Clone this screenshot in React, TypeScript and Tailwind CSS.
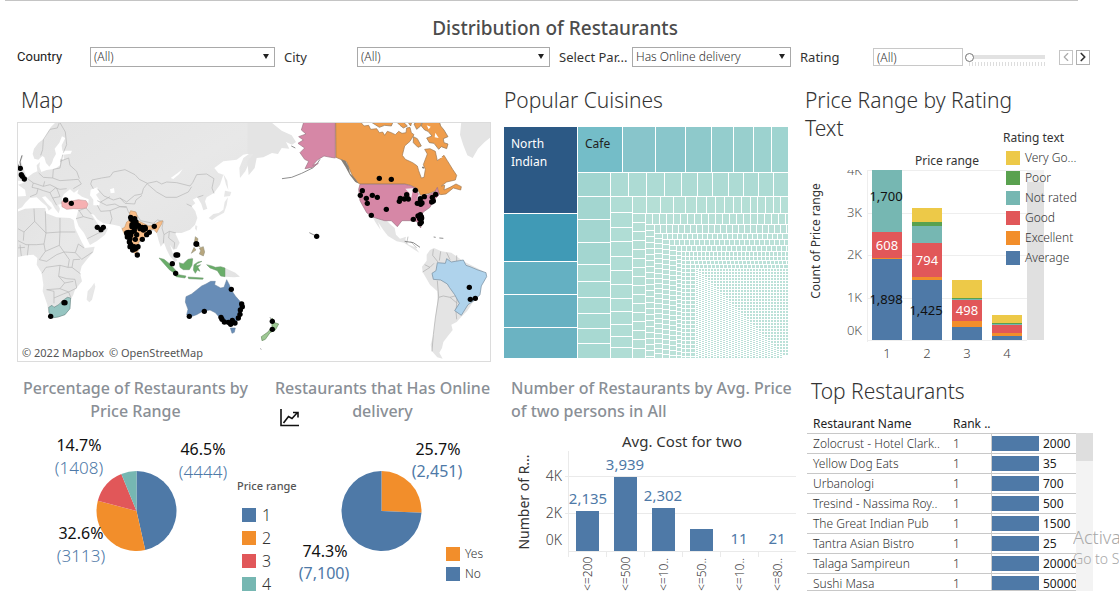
import React from "react";
import { ChevronLeft, ChevronRight } from "lucide-react";

const BLUE = "#4e79a7";
const ORANGE = "#f28e2b";
const RED = "#e15759";
const TEAL = "#76b7b2";
const GREEN = "#59a14f";
const YELLOW = "#edc948";

/* ---------- Filters ---------- */

function SelectFilter({ id, label, value, sans }: { id: string; label: string; value: string; sans?: boolean }) {
  return (
    <>
      <label
        htmlFor={id}
        className={
          sans
            ? "truncate font-['Roboto',sans-serif] text-[13px] text-[#222]"
            : "truncate text-[13px] text-[#333]"
        }
      >
        {label}
      </label>
      <div className="relative mr-[9px] h-5">
        <select
          id={id}
          className="block h-5 w-full appearance-none border border-[#a9a9a9] bg-white pl-[3px] pr-5 text-xs leading-[18px] font-light text-[#333] outline-none"
        >
          <option>{value}</option>
        </select>
        <svg viewBox="0 0 6 5" className="pointer-events-none absolute top-[7px] right-[6px] h-[5px] w-[6px]">
          <path d="M0 0H6L3 5Z" fill="#222" />
        </svg>
      </div>
    </>
  );
}

function Filters() {
  return (
    <form className="grid grid-cols-[73px_194fr_73px_202fr_73px_168fr_73px_90fr_96fr_60px] items-center pl-[17px] leading-5">
      <SelectFilter id="country" label="Country" value="(All)" sans />
      <SelectFilter id="city" label="City" value="(All)" />
      <SelectFilter id="param" label="Select Par..." value="Has Online delivery" />
      <label htmlFor="rating" className="text-[13px] text-[#333]">
        Rating
      </label>
      <input
        id="rating"
        defaultValue="(All)"
        className="h-[18px] w-full border border-[#c8c8c8] pl-[3px] text-xs font-light text-[#333] outline-none"
      />
      <div className="mr-[14px] ml-[2px] flex flex-col">
        <input
          type="range"
          aria-label="Rating value"
          defaultValue={0}
          className="mt-1 h-[9px] w-full appearance-none bg-transparent bg-[linear-gradient(#e2e2e2,#e2e2e2)] bg-[length:100%_4px] bg-center bg-no-repeat [&::-webkit-slider-thumb]:h-[9px] [&::-webkit-slider-thumb]:w-[9px] [&::-webkit-slider-thumb]:appearance-none [&::-webkit-slider-thumb]:rounded-full [&::-webkit-slider-thumb]:border [&::-webkit-slider-thumb]:border-[#777] [&::-webkit-slider-thumb]:bg-white"
        />
        <div className="ml-1 h-1 bg-[repeating-linear-gradient(90deg,#ddd_0_1px,transparent_1px_3px)]" />
      </div>
      <div className="flex gap-[3px]">
        <button type="button" aria-label="Previous" className="flex h-[15px] w-[14px] items-center justify-center border border-[#c4c4c4] text-[#aaa]">
          <ChevronLeft size={14} className="shrink-0" />
        </button>
        <button type="button" aria-label="Next" className="flex h-[15px] w-[14px] items-center justify-center border border-[#b0b0b0] text-[#333]">
          <ChevronRight size={14} strokeWidth={3} className="shrink-0" />
        </button>
      </div>
    </form>
  );
}

/* ---------- Map ---------- */

const westDots: number[][] = [
  [31, 151], [34, 170], [37, 175], [43, 183], [167, 246], [184, 256], [262, 328], [273, 335], [280, 328],
  [162, 554], [165, 554], [122, 595], [558, 378], [560, 378], [498, 411], [503, 411], [487, 437], [497, 466],
  [664, 514], [538, 595], [583, 580], [633, 598], [636, 604], [643, 612], [655, 613], [662, 619], [667, 607],
  [675, 615], [685, 600], [690, 589], [691, 576], [697, 566], [695, 558], [362, 298], [374, 302], [370, 310],
  [372, 320], [386, 323], [397, 328], [406, 332], [418, 343], [410, 350], [433, 325], [355, 343], [352, 350],
  [365, 343], [373, 338], [356, 356], [362, 352], [380, 350], [376, 364], [397, 364], [358, 372], [360, 386],
  [372, 386], [384, 386], [368, 396], [375, 393], [382, 411], [405, 328], [366, 320], [350, 345],
  [364, 304], [378, 312], [380, 320], [390, 332], [400, 336], [352, 357], [360, 362], [362, 379], [366, 388],
  [378, 390], [366, 326], [376, 328],
];

const eastDots: number[][] = [
  [388, 181], [424, 184], [337, 218], [331, 232], [349, 241], [367, 232], [382, 238], [352, 256], [409, 274],
  [364, 292], [448, 250], [451, 241], [463, 243], [475, 243], [470, 230], [496, 217], [502, 256], [511, 242],
  [511, 252], [512, 259], [523, 236], [516, 255], [547, 238], [545, 252], [550, 249], [557, 229], [490, 304],
  [504, 294], [511, 290], [514, 296], [509, 302], [514, 313], [510, 317], [200, 355], [67, 610], [67, 634],
  [658, 508], [661, 544], [676, 541], [513, 304], [515, 300],
];

function WorldMap() {
  return (
    <svg viewBox="1 1 472 238" className="block w-full" role="img" aria-label="Restaurant locations">
      <defs>
        <linearGradient id="relief" x1="0" y1="0" x2="1" y2="1">
          <stop offset="0" stopColor="#e3e3e3" />
          <stop offset="0.5" stopColor="#e8e8e8" />
          <stop offset="1" stopColor="#e2e2e2" />
        </linearGradient>
      </defs>
      <g transform="translate(-7 -4) scale(0.33333)" strokeLinejoin="round">
        <g fill="url(#relief)">
          <path d="M122 28L105 60L85 75L72 92L68 108L73 122L85 125L97 114L103 118L108 135L118 146L126 135L130 122L138 108L134 92L148 74L156 55L166 60L155 82L157 98L186 98L182 107L160 110L162 125L150 122L150 142L135 152L110 156L94 162L88 146L90 132L80 142L82 160L70 165L50 180L40 195L24 200L45 215L48 234L20 236L20 276L36 268L46 254L60 240L80 238L95 252L110 265L116 278L126 270L112 257L96 238L106 235L125 254L135 272L146 286L150 272L144 260L158 257L155 242L162 228L180 214L192 224L206 214L202 226L216 236L236 244L234 270L205 276L198 302L206 325L222 345L232 365L240 381L262 368L285 350L294 332L282 322L265 320L252 300L244 288L252 290L262 304L280 316L310 320L330 325L338 338L350 345L352 370L362 398L374 404L382 385L400 365L418 345L430 338L440 345L446 368L452 386L462 374L470 395L480 415L495 432L502 427L488 405L480 380L490 395L500 392L509 374L500 355L495 345L515 345L540 335L555 320L562 300L556 280L545 265L556 256L548 245L562 238L574 258L580 277L592 272L585 250L590 238L612 225L630 200L640 170L625 165L613 150L640 130L680 125L700 110L720 106L700 120L688 150L690 180L706 160L720 130L735 108L760 92V10H180L214 28L210 42L190 44L182 62L198 66L226 44L235 34L238 10H140Z" />
          <path d="M20 282L45 272L80 270L106 270L108 286L140 298L180 300L191 306L195 330L214 370L225 390L254 386L250 402L230 425L215 445L210 465L216 490L195 515L190 530L182 545L180 570L165 590L145 597L125 600L115 585L112 560L98 520L100 500L95 465L80 440L82 420L70 410L50 412L20 418Z" />
          <path d="M253 494L256 506L246 545L238 553L230 545L233 520L245 506Z" />
          <path d="M20 150L28 132L38 110L40 114L33 130L40 150L50 178L44 190L22 188Z" />
          <path d="M596 300L610 288L626 285L640 275L644 252L654 238L650 262L642 284L620 296L606 306ZM642 236L645 218L664 222L660 234ZM640 168L652 188L655 216L648 200ZM645 450L676 464L690 476L672 478L645 476Z" />
          <path d="M384 398L390 405L388 416L380 412ZM512 440L525 430L545 418L550 426L530 436ZM556 322L562 324L560 338L555 332Z" />
        </g>
        <path d="M242 215L262 208L268 222L258 230L270 248L268 262L250 262L250 245L240 232ZM300 214L312 210L314 224L302 226ZM482 180L504 164L518 153L508 168L490 183Z" fill="#fff" />
        <path d="M36 112L30 132L34 150M26 140L24 150" fill="none" stroke="#666" strokeWidth="2.5" />
        <g fill="none" stroke="#b5b5b5" strokeWidth="2">
          <path d="M148 14L142 30L120 34L100 65L98 95L92 112M150 14L166 42L170 80L160 104M158 110L150 150L130 154L128 180L100 178L86 165M128 180L150 188L205 184L214 198L190 212M150 130L176 120L180 142L200 160L208 182M50 180L70 195L66 208L84 212L80 228L60 236M70 195L100 205L120 200L140 210L150 236L128 240L120 224L100 218L84 212M100 205L104 190M120 224L136 210L150 214L170 212M128 240L140 262" />
          <path d="M250 212L242 198L246 186L275 180L300 176L310 162L345 155L375 170L388 184L412 196L400 212L396 228L374 232L350 252L330 240L310 246L292 238L282 234L262 212M412 196L440 190L455 198L470 192L500 194L540 204L548 194L560 170L590 168L612 182L606 210L612 226M412 198L440 222L468 238L500 238L535 222L545 206M262 248L290 262L315 258L330 266L350 266M330 240L345 256L374 258L378 246L396 232M272 252L300 236" />
          <path d="M262 262L272 280L300 278L330 266L350 268L356 284M300 278L306 302L300 318M206 278L228 270L244 288M206 276L220 296L250 304M198 302L220 296M232 362L266 345L285 336M262 320L270 346M356 284L375 282L392 308L430 316L442 306L460 310L456 330L462 350L478 340L498 345M418 342L420 326L436 320M462 350L460 376M478 340L476 360L494 374L492 392M545 265L530 258M562 238L580 232" />
          <path d="M72 272L74 310L42 342L20 330M106 280L108 345L150 342V300M150 342L196 342M74 310L108 345L102 378L80 380L48 380L20 366M42 342L40 368M102 378L106 400L88 425M150 342L148 382L162 402L196 404L205 378L222 390M106 400L148 382M88 425L110 430L140 410L162 402M196 404L215 424L248 402M162 402L178 425L174 448L186 448L212 468M174 448L150 442L108 448L96 466M150 442L146 475L164 495L150 512L110 515M186 448L190 425L210 424M146 475L170 482L195 484L200 510L176 522L150 512M110 515L132 520V556M132 540L160 528L176 522L182 538M164 495L190 490M30 380L34 414M56 380L52 412M20 390L45 388" />
        </g>
        <g stroke="#8b8b78" strokeWidth="1.5">
          <path d="M155 252L162 243L180 250L205 245L228 248L234 258L230 270L206 273L190 272L170 274L156 266Z" fill="#f6b0b2" stroke="#bb8d8f" />
          <path d="M362 278L378 282L382 296L378 306L392 312L416 324L430 322L445 312L458 308L455 318L446 332L440 344L432 334L420 334L414 346L400 362L386 372L386 396L376 408L368 400L358 378L354 358L342 346L336 332L344 328L350 312L364 302L358 288Z" fill="#f9bd88" stroke="#b98d62" />
          <path d="M182 540L180 572L165 590L145 597L125 600L117 583L116 568L126 562L132 568L146 560L158 548L172 538Z" fill="#96c5c1" stroke="#55716f" />
          <path d="M447 420L462 424L482 440L498 458L496 468L478 455ZM508 434L520 438L534 424L548 422L546 442L538 455L520 455L510 448ZM552 440L564 432L576 430L560 438L558 444L572 440L564 448L570 460L562 456L556 466L550 456ZM590 440L606 444L616 448L632 446L645 450L645 476L632 474L622 458L600 450ZM494 468L528 474L525 480L498 476ZM534 477L580 480L578 484L536 482Z" fill="#69ad69" stroke="#6f9670" />
          <path d="M556 356L564 362L562 374L570 386L560 384L553 374ZM568 390L580 386L584 402L580 414L568 408L572 398ZM552 388L558 396L544 406Z" fill="#b7a67e" />
          <path d="M528 536L545 528L560 516L575 504L588 498L602 490L616 490L614 500L632 510L642 508L650 485L658 500L664 516L676 534L690 550L698 566L694 586L684 606L672 618L652 617L638 604L628 598L616 584L600 576L578 580L560 590L538 598L530 590L534 574L526 552ZM661 630L676 630L673 643L666 646Z" fill="#688db7" stroke="#647d99" />
        </g>
        <g>
          {westDots.map(([x, y], i) => (
            <circle key={i} cx={x} cy={y} r="8" fill="#000" />
          ))}
        </g>
      </g>
      <g transform="translate(233 -4) scale(0.33333)" strokeLinejoin="round">
        <g fill="#e4e4e4">
          <path d="M-8 10H60L95 38L125 52L138 72L126 80L108 72L118 92L95 90L84 108L66 105L40 118L20 120L14 150L-4 172L-8 130L10 108L-8 108Z" />
          <path d="M634 10L630 50L640 82L652 112L668 120L684 92L704 72L722 58V10Z" />
          <path d="M368 298L382 300L408 306L424 322L434 330L438 350L450 362L468 356L466 366L476 380L496 388L508 404L498 398L480 386L462 374L440 370L414 354L400 336L384 312L392 336L378 316Z" />
          <path d="M540 396L552 390L574 400L604 404L640 430L700 460L690 520L652 578L634 596L620 612L604 620L608 636L592 656L580 672L576 690L568 704L578 722L562 718L546 700L542 680L550 650L556 600L562 550L562 520L540 500L518 462L516 446L530 428L530 410Z" />
        </g>
        <path d="M550 394L548 412L564 432M524 440L540 448L552 436M518 462L540 448M562 488L566 538L580 534L600 538L622 556M566 538L556 600L550 650L546 700M600 538L622 532L618 580L620 604M572 400L568 428M590 404L600 425M620 412V430M474 356L470 376M482 370L500 390" fill="none" stroke="#aaa" strokeWidth="2" />
        <path d="M96 182L125 178L155 166L188 150L202 136L210 124M464 370L490 374L510 388M178 344L194 352M60 598L66 606M551 357L557 358M568 360L580 361M31 692L34 694M124 84L136 90" fill="none" stroke="#777" strokeWidth="2.5" />
        <path d="M162 10H256V120L242 118L222 114L202 126L188 142L205 136L188 148L165 152L176 130L164 124L150 104L164 90L144 76L160 66L146 56L168 48L154 36Z" fill="#d687a6" stroke="#9b7384" strokeWidth="2" />
        <path d="M257 10H330L342 24L356 22L362 34L380 32L388 44L398 42L404 52L412 40L424 44L436 50L446 40L456 46L468 44L470 30L480 28L484 44L492 50L480 70L464 84L457 112L466 124L488 134L502 144L506 158L514 180L522 178L526 154L520 140L532 108L524 94L540 92L556 100L562 128L582 112L592 128L608 154L620 172L616 186L590 192L574 204L584 202L582 216L600 208L618 198L634 206L632 216L610 210L588 228L572 230L558 218L538 226L512 232L502 212L482 202L465 198H330L316 190L304 166L290 132L258 118Z" fill="#ef9d4c" stroke="#9b7650" strokeWidth="2" />
        <path d="M360 10H430L424 24L404 22L388 28ZM440 12H460L472 24L460 30L450 22ZM472 10H486L482 24ZM492 18L502 10H516L512 24L500 34ZM518 10H568L572 24L582 36L594 56L580 62L582 74L594 78L590 92L574 86L566 94L552 76L538 74L530 60L546 54L534 40L524 36L514 24ZM490 56L502 62L514 84L504 88L490 74Z" fill="#ef9d4c" stroke="#8a7357" strokeWidth="2" />
        <path d="M530 22L542 26L536 34ZM556 44L566 60L554 58ZM435 26L452 28L446 34ZM560 108L578 118L566 122Z" fill="#fff" />
        <path d="M272 124L286 128L296 146L300 166L314 180L326 196L316 192L300 172L286 146ZM516 146L522 146V152L516 150Z" fill="#858079" />
        <path d="M330 199H465L482 203L497 211L504 226L512 236L535 230L554 222L562 208L568 230L550 248L540 268L520 282L510 296L514 316L512 330L500 310L480 308L456 308L442 326L424 308L404 308L390 304L366 296L350 284L330 248L326 214Z" fill="#d687a6" stroke="#9b7384" strokeWidth="2" />
        <path d="M466 212L496 210L502 222L488 220L482 250L478 226ZM506 228L518 246L500 244Z" fill="#fff" opacity="0.85" />
        <path d="M562 434L586 436L590 422L604 432L628 428L640 426L648 442L660 446L684 456L708 464L710 476L694 504L690 530L672 548L654 560L634 592L614 578L628 556L614 530L598 508L592 498L572 486L550 484L546 466L558 458Z" fill="#afd3ec" stroke="#71889a" strokeWidth="2" />
        <path d="M66 600L74 614L86 618L76 636L60 644L46 664L36 668L34 656L54 642L66 626Z" fill="#9dc893" stroke="#66895e" strokeWidth="2" />
        {eastDots.map(([x, y], i) => (
          <circle key={i} cx={x} cy={y} r="8" fill="#000" />
        ))}
      </g>
      <text x="5" y="235" fontSize="11" fill="#555">
        © 2022 Mapbox
      </text>
      <text x="92" y="235" fontSize="11" fill="#555">
        © OpenStreetMap
      </text>
    </svg>
  );
}

/* ---------- Treemap ---------- */

type Tile = { x: number; y: number; w: number; h: number; c: string };

function buildTiles(): Tile[] {
  const W = 284;
  const H = 231;
  const tiles: Tile[] = [];
  const column = (x: number, x2: number, ys: number[], c: (i: number) => string) => {
    for (let i = 0; i < ys.length - 1; i++) tiles.push({ x, y: ys[i], w: x2 - x - 1, h: ys[i + 1] - ys[i] - 1, c: c(i) });
  };
  const row = (y: number, y2: number, xs: number[], c: (i: number) => string) => {
    for (let i = 0; i < xs.length - 1; i++) tiles.push({ x: xs[i], y, w: xs[i + 1] - xs[i] - 1, h: y2 - y - 1, c: c(i) });
  };
  const steps = (from: number, to: number, step: number) => {
    const out: number[] = [];
    for (let v = from; v < to; v += step) out.push(v);
    out.push(to + 1);
    return out;
  };
  const top = ["#74bdc8", "#88c5cb", "#89c6cb", "#8ec9cb", "#94cdcd", "#98cfcd", "#9cd2cf", "#9fd4d0"];
  column(0, 74, [0, 87, 135, 168, 201, 232], (i) => ["#2c5985", "#409ab6", "#64b0c2", "#67b1c2", "#6bb3c2"][i]);
  row(0, 46, [74, 119, 152, 182, 208, 230, 250, 268, 285], (i) => top[i]);
  row(46, 70, [74, 107, 125, 143, 161, 178, 194, 209, 225, 240, 255, 270, 285], (i) => (i === 0 ? "#a1d5d0" : "#addbd4"));
  column(74, 107, [70, 93, 116, 138, 155, 171, 187, 202, 217, 232], (i) => (i < 3 ? "#a3d6d0" : "#a8d9d2"));
  row(70, 87, [129, 143, 157, 170, 182, 193, 203, 212, 221, 230, 238, 247, 254, 262, 270, 277, 285], () => "#b5dfd6");
  column(107, 129, [70, 86, 101, 115, 130, 144, 158, 172, 185, 198, 210, 221, 232], () => "#b0ddd5");
  row(87, 98, steps(142, W, 7), () => "#b8e0d7");
  column(129, 142, steps(87, H, 9), () => "#b6dfd6");
  row(98, 107, steps(151, W, 6), () => "#badfd7");
  column(142, 151, steps(98, H, 6), () => "#b9e0d7");
  const xs = [151, 159, 166, 173, 178, 182, 187, 192];
  const ys = [107, 113, 119, 125, 130, 134, 138, 142];
  while (xs[xs.length - 1] < W - 3) xs.push(xs[xs.length - 1] + 3);
  while (ys[ys.length - 1] < H - 3) ys.push(ys[ys.length - 1] + 3);
  for (let i = 0; i < xs.length - 1 && i < ys.length - 1; i++) {
    const small = i > 6;
    row(ys[i], ys[i + 1], steps(xs[i + 1], W, small ? 3 : i < 3 ? 5 : 4), () => "#bbe1d8");
    column(xs[i], xs[i + 1], steps(ys[i], H, small ? 2 : i < 3 ? 5 : 4), () => "#bbe1d8");
  }
  return tiles.filter((t) => t.w > 0 && t.h > 0);
}

const tiles = buildTiles();

function Treemap() {
  return (
    <svg viewBox="0 0 284 231" className="block w-full" shapeRendering="crispEdges" role="img" aria-label="Cuisines by popularity">
      {tiles.map((t, i) => (
        <rect key={i} x={t.x} y={t.y} width={t.w} height={t.h} fill={t.c} />
      ))}
      <g fontSize="12">
        <text x="7" y="21" fill="#fff">North</text>
        <text x="7" y="39" fill="#fff">Indian</text>
        <text x="81" y="21" fill="#222">Cafe</text>
      </g>
    </svg>
  );
}

/* ---------- Price range by rating ---------- */

const stacks: { x: number; parts: [number, number, string][] }[] = [
  { x: 71, parts: [[20, 82, TEAL], [82, 108, RED], [108, 109, ORANGE], [109, 190, BLUE]] },
  { x: 111, parts: [[58, 72, YELLOW], [72, 76, GREEN], [76, 93, TEAL], [93, 127, RED], [127, 130, ORANGE], [130, 190, BLUE]] },
  { x: 151, parts: [[130, 148, YELLOW], [148, 149, GREEN], [149, 150, TEAL], [150, 171, RED], [171, 177, ORANGE], [177, 190, BLUE]] },
  { x: 191, parts: [[165, 173, YELLOW], [173, 174, GREEN], [174, 175, TEAL], [175, 183, RED], [183, 186, ORANGE], [186, 190, BLUE]] },
];

function PriceChart() {
  return (
    <svg viewBox="0 0 260 212" className="block h-[212px] w-[260px]" role="img" aria-label="Price range by rating text">
      <defs>
        <clipPath id="plot">
          <rect x="0" y="20" width="260" height="192" />
        </clipPath>
      </defs>
      <path d="M66.5 20V192M66 20.5H226M66 63.5H226M66 105.5H226M66 148.5H226M66 190.5H226" stroke="#eee" fill="none" />
      <rect x="226" y="20" width="17" height="170" fill="#e0e0e0" />
      <rect x="226" y="20" width="17" height="12" fill="#f2f2f2" />
      <g shapeRendering="crispEdges">
        {stacks.map((s) =>
          s.parts.map(([a, b, c]) => <rect key={s.x + "-" + a} x={s.x} y={a} width="30" height={b - a} fill={c} />)
        )}
      </g>
      <g fontSize="12" textAnchor="middle">
        <text x="146" y="15" fill="#333">Price range</text>
        <text transform="translate(19 91) rotate(-90)" fill="#333" fontSize="12">Count of Price range</text>
      </g>
      <g fontSize="13" fontWeight="300" fill="#555" textAnchor="end" clipPath="url(#plot)">
        <text x="61" y="25">4K</text>
        <text x="61" y="67">3K</text>
        <text x="61" y="109">2K</text>
        <text x="61" y="152">1K</text>
        <text x="61" y="185">0K</text>
      </g>
      <g fontSize="13" fontWeight="300" fill="#444" textAnchor="middle">
        <text x="86" y="208">1</text>
        <text x="126" y="208">2</text>
        <text x="166" y="208">3</text>
        <text x="206" y="208">4</text>
      </g>
      <g fontSize="13" textAnchor="middle" fill="#111">
        <text x="85" y="51">1,700</text>
        <text x="85" y="154">1,898</text>
        <text x="125" y="165">1,425</text>
        <text x="86" y="100" fill="#fff">608</text>
        <text x="126" y="115" fill="#fff">794</text>
        <text x="166" y="165" fill="#fff">498</text>
      </g>
    </svg>
  );
}

const ratingLegend: [string, string][] = [
  ["Very Go...", "bg-[#edc948]"],
  ["Poor", "bg-[#59a14f]"],
  ["Not rated", "bg-[#76b7b2]"],
  ["Good", "bg-[#e15759]"],
  ["Excellent", "bg-[#f28e2b]"],
  ["Average", "bg-[#4e79a7]"],
];

/* ---------- Pies ---------- */

function slice(cx: number, cy: number, r: number, from: number, to: number) {
  const p = (t: number) => `${cx + r * Math.sin(t * 2 * Math.PI)} ${cy - r * Math.cos(t * 2 * Math.PI)}`;
  return `M${cx} ${cy}L${p(from)}A${r} ${r} 0 ${to - from > 0.5 ? 1 : 0} 1 ${p(to)}Z`;
}

function PricePie() {
  return (
    <svg viewBox="0 0 237 168" className="mx-auto block h-[168px] w-[237px]" role="img" aria-label="Percentage by price range">
      <path d={slice(119.5, 88, 40, 0, 0.465)} fill={BLUE} />
      <path d={slice(119.5, 88, 40, 0.465, 0.791)} fill={ORANGE} />
      <path d={slice(119.5, 88, 40, 0.791, 0.938)} fill={RED} />
      <path d={slice(119.5, 88, 40, 0.938, 1)} fill={TEAL} />
      <g fontSize="16" textAnchor="middle" fill="#111">
        <text x="62" y="28">14.7%</text>
        <text x="186" y="32">46.5%</text>
        <text x="64" y="116">32.6%</text>
      </g>
      <g fontSize="17" fontWeight="300" textAnchor="middle" fill={BLUE}>
        <text x="62" y="51">(1408)</text>
        <text x="186" y="55">(4444)</text>
        <text x="64" y="139">(3113)</text>
      </g>
    </svg>
  );
}

function DeliveryPie() {
  return (
    <svg viewBox="0 0 217 168" className="mx-auto block h-[168px] w-[217px]" role="img" aria-label="Online delivery share">
      <path d={slice(107.5, 88, 40, 0, 0.257)} fill={ORANGE} />
      <path d={slice(107.5, 88, 40, 0.257, 1)} fill={BLUE} />
      <g fontSize="16" textAnchor="middle" fill="#111">
        <text x="164" y="32">25.7%</text>
        <text x="51" y="134">74.3%</text>
      </g>
      <g fontSize="16" textAnchor="middle" fill={BLUE}>
        <text x="163" y="54">(2,451)</text>
        <text x="50" y="156">(7,100)</text>
      </g>
    </svg>
  );
}

const priceLegend: [string, string][] = [
  ["1", "bg-[#4e79a7]"],
  ["2", "bg-[#f28e2b]"],
  ["3", "bg-[#e15759]"],
  ["4", "bg-[#76b7b2]"],
];

/* ---------- Cost chart ---------- */

const costBars: [number, number, string][] = [
  [73, 40, "<=200"],
  [111, 74, "<=500"],
  [149, 43, "<=10.."],
  [187, 22, "<=50.."],
  [225, 0, "<=10.."],
  [263, 0, "<=80.."],
];

function CostChart() {
  return (
    <svg viewBox="0 0 286 168" className="block h-[168px] w-[286px] overflow-visible" role="img" aria-label="Restaurants by average cost for two">
      <path d="M65.5 28V134M62 53.5H293M62 90.5H293M65 128.5H293M103.5 128V134M141.5 128V134M179.5 128V134M217.5 128V134M255.5 128V134" stroke="#eaeaea" fill="none" />
      {costBars.map(([x, h, label]) => (
        <g key={x}>
          <rect x={x} y={128 - h} width="23" height={h} fill={BLUE} />
          <text transform={`translate(${x + 16} 168) rotate(-90)`} fontSize="12" fontWeight="300" fill="#333">
            {label}
          </text>
        </g>
      ))}
      <g textAnchor="middle">
        <text x="179" y="24" fontSize="15" fill="#333">Avg. Cost for two</text>
        <text transform="translate(26 79) rotate(-90)" fontSize="14" fill="#333">Number of R...</text>
      </g>
      <g fontSize="14" fontWeight="300" fill="#444" textAnchor="end">
        <text x="59" y="58">4K</text>
        <text x="59" y="95">2K</text>
        <text x="59" y="122">0K</text>
      </g>
      <g fontSize="15" textAnchor="middle" fill={BLUE}>
        <text x="85" y="81">2,135</text>
        <text x="122" y="47">3,939</text>
        <text x="160" y="78">2,302</text>
        <text x="236" y="121">11</text>
        <text x="274" y="121">21</text>
      </g>
    </svg>
  );
}

/* ---------- Top restaurants ---------- */

const restaurants: [string, string][] = [
  ["Zolocrust - Hotel Clark..", "2000"],
  ["Yellow Dog Eats", "35"],
  ["Urbanologi", "700"],
  ["Tresind - Nassima Roy..", "500"],
  ["The Great Indian Pub", "1500"],
  ["Tantra Asian Bistro", "25"],
  ["Talaga Sampireun", "20000"],
  ["Sushi Masa", "50000"],
];

function TopRestaurants() {
  return (
    <div className="ml-[6px] flex h-[176px] overflow-hidden">
      <div className="w-[269px] overflow-hidden border-b border-[#c8c8c8]">
        <table className="w-full table-fixed border-collapse text-left text-xs">
          <colgroup>
            <col className="w-[140px]" />
            <col className="w-[44px]" />
            <col className="w-[50px]" />
            <col className="w-[35px]" />
          </colgroup>
          <thead>
            <tr className="h-[18px] whitespace-nowrap text-[#222]">
              <th className="p-0 pl-[6px] font-normal">Restaurant Name</th>
              <th className="p-0 pl-[6px] font-normal">Rank ..</th>
              <th className="p-0" aria-label="Cost bar" />
              <th className="p-0" aria-label="Cost" />
            </tr>
          </thead>
          <tbody>
            {restaurants.map(([name, cost]) => (
              <tr key={name} className="h-5 border-t border-[#c8c8c8] leading-[19px] whitespace-nowrap">
                <td className="overflow-hidden p-0 pl-[6px] font-light text-[#333]">{name}</td>
                <td className="p-0 pl-[6px] font-light text-[#333]">1</td>
                <td className="border-l border-[#ccc] p-0">
                  <div className="h-[15px] w-[47px] bg-[#4e79a7]" />
                </td>
                <td className="overflow-hidden border-r border-[#ccc] p-0 pl-[2px] text-[#222]">{cost}</td>
              </tr>
            ))}
          </tbody>
        </table>
      </div>
      <div className="mt-[18px] w-[17px] bg-[#f3f3f3]">
        <div className="h-7 bg-[#dedede]" />
      </div>
    </div>
  );
}

/* ---------- Page ---------- */

export default function App() {
  const heading = "text-[21px] leading-7 font-light text-[#333]";
  const caption = "text-[16px] leading-[23px] font-medium text-[#8a8f96]";
  return (
    <main className="relative min-h-screen w-full overflow-hidden bg-white font-['Noto_Sans','Open_Sans',sans-serif]">
      <div className="mr-[41px] ml-[5px] h-px bg-[#c4c4c4]" />
      <h1 className="mt-[14px] mr-[9px] mb-[5px] text-center text-[19px] leading-[27px] font-medium text-[#4c4c4c]">
        Distribution of Restaurants
      </h1>
      <Filters />

      <div className="mt-[19px] grid grid-cols-[minmax(0,474fr)_minmax(0,286fr)_minmax(0,318fr)] gap-x-3 pl-[17px]">
        <section>
          <h2 className={heading + " pl-1"}>Map</h2>
          <div className="mt-2 border border-[#dcdcdc]">
            <WorldMap />
          </div>
        </section>

        <section className="px-px">
          <h2 className={heading}>Popular Cuisines</h2>
          <div className="mt-[13px]">
            <Treemap />
          </div>
        </section>

        <section className="relative">
          <h2 className={heading + " mb-2 w-[230px] pl-1"}>Price Range by Rating Text</h2>
          <PriceChart />
          <div className="absolute top-[42px] left-[202px] text-xs text-[#333]">
            <h3 className="leading-5">Rating text</h3>
            <ul className="pl-[3px] font-light">
              {ratingLegend.map(([label, color]) => (
                <li key={label} className="flex h-5 items-center gap-[5px] whitespace-nowrap">
                  <span className={"h-[14px] w-[14px] " + color} />
                  {label}
                </li>
              ))}
            </ul>
          </div>
        </section>
      </div>

      <div className="mt-[15px] grid grid-cols-[minmax(0,474fr)_minmax(0,286fr)_minmax(0,318fr)] gap-x-3 pl-[17px]">
        <div className="grid grid-cols-2">
          <section className="relative">
            <h2 className={caption + " text-center"}>
              Percentage of Restaurants by
              <br />
              Price Range
            </h2>
            <PricePie />
            <div className="absolute top-[100px] left-[220px] z-10">
              <h3 className="text-[11px] leading-[18px] font-medium whitespace-nowrap text-[#555]">Price range</h3>
              <ul className="mt-2 pl-[5px] text-[16px] font-light text-[#333]">
                {priceLegend.map(([label, color]) => (
                  <li key={label} className="flex h-[23px] items-center gap-[6px]">
                    <span className={"h-[14px] w-[14px] " + color} />
                    {label}
                  </li>
                ))}
              </ul>
            </div>
          </section>
          <section className="relative pl-5">
            <h2 className={caption + " text-center whitespace-nowrap"}>
              Restaurants that Has Online
              <br />
              delivery
            </h2>
            <svg viewBox="0 0 20 18" className="absolute top-8 left-[26px] h-[18px] w-5" fill="none" stroke="#111" strokeWidth="1.6">
              <path d="M1 0V16.5H19M3.5 14L8.5 7.5L12 9.5L17 4M13 3.5H18V8.5" />
            </svg>
            <DeliveryPie />
            <ul className="absolute top-[167px] left-48 text-xs font-light text-[#333]">
              <li className="flex h-5 items-center gap-[5px]">
                <span className="h-[14px] w-[14px] bg-[#f28e2b]" />
                Yes
              </li>
              <li className="flex h-5 items-center gap-[5px]">
                <span className="h-[14px] w-[14px] bg-[#4e79a7]" />
                No
              </li>
            </ul>
          </section>
        </div>

        <section>
          <h2 className={caption + " pl-2 whitespace-nowrap"}>
            Number of Restaurants by Avg. Price
            <br />
            of two persons in All
          </h2>
          <CostChart />
        </section>

        <section>
          <h2 className={heading + " mb-[10px] pl-[10px]"}>Top Restaurants</h2>
          <TopRestaurants />
        </section>
      </div>

      <div className="pointer-events-none absolute right-0 bottom-[34px] w-[46px] overflow-hidden whitespace-nowrap text-[#a8a8a8]">
        <p className="text-[18px] leading-6 font-light">Activa</p>
        <p className="text-[14px] leading-5 font-light">Go to S</p>
      </div>
    </main>
  );
}
